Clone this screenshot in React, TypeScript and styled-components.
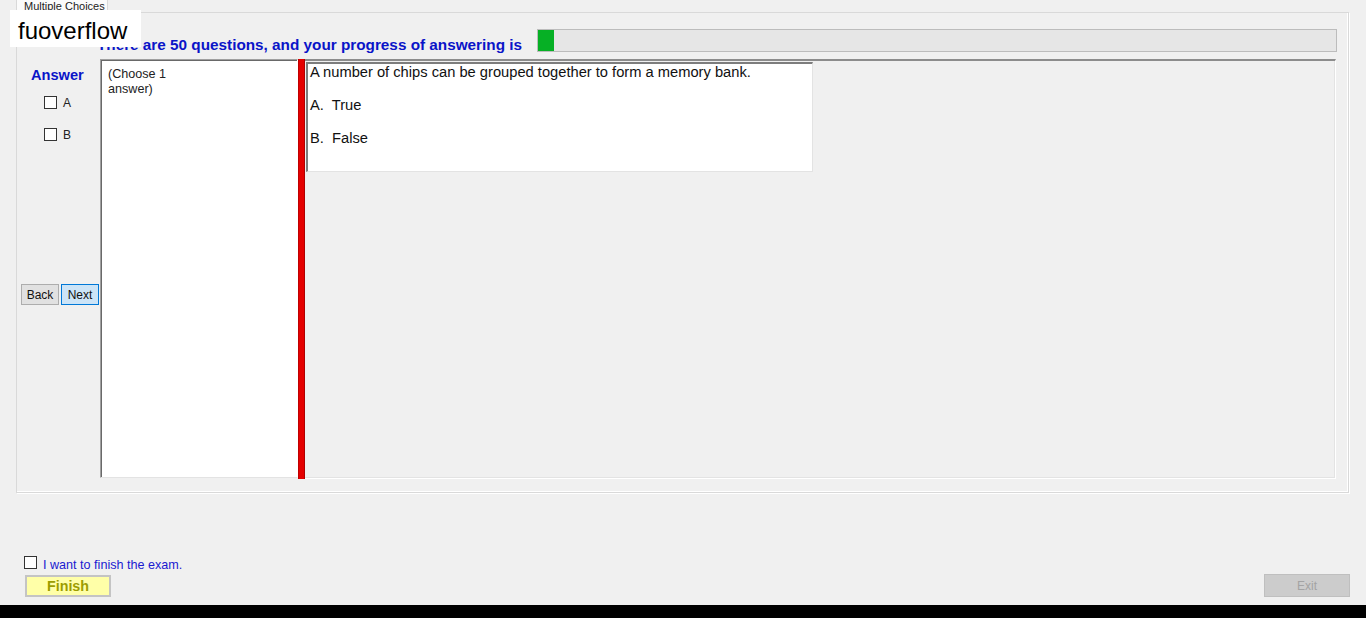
import React from "react";
import styled, { createGlobalStyle } from "styled-components";

const Global = createGlobalStyle`
  html, body { margin: 0; padding: 0; background: #f0f0f0; }
  body { font-family: "Liberation Sans", Arial, sans-serif; }
  * { box-sizing: border-box; }
`;

const Screen = styled.div`
  width: 1366px;
  height: 618px;
  background: #f0f0f0;
  display: flex;
  flex-direction: column;
  position: relative;
  overflow: hidden;
`;

const Main = styled.div`
  height: 605px;
  display: flex;
  flex-direction: column;
  padding: 0 17px 0 16px;
`;

const TabStrip = styled.div`
  height: 12px;
  display: flex;
  align-items: flex-end;
`;

const Tab = styled.div`
  width: 92px;
  height: 13px;
  margin-bottom: -1px;
  background: #fbfbfb;
  border: 1px solid #d9d9d9;
  border-top: none;
  border-bottom: none;
  font-size: 11px;
  line-height: 13px;
  color: #222;
  padding-left: 7px;
  overflow: hidden;
  position: relative;
  z-index: 1;
`;

const TabPage = styled.div`
  height: 481px;
  border: 1px solid #d9d9d9;
  box-shadow: inset -1px -1px 0 #fff, 1px 1px 0 #fff;
  display: flex;
  flex-direction: column;
`;

const ProgressRow = styled.div`
  height: 46px;
  display: flex;
  align-items: flex-start;
  padding-right: 11px;
`;

const ProgressLabel = styled.div`
  width: 505px;
  margin-top: 23px;
  text-align: right;
  font-size: 15.3px;
  line-height: 17px;
  font-weight: bold;
  color: #0a14c8;
  white-space: nowrap;
`;

const ProgressBar = styled.div`
  flex: 1;
  margin-left: 15px;
  margin-top: 16px;
  height: 23px;
  background: #e6e6e6;
  border: 1px solid #bcbcbc;
  display: flex;
`;

const ProgressFill = styled.div`
  background: #06b025;
  height: 100%;
`;

const ContentRow = styled.div`
  display: flex;
  height: 420px;
`;

const AnswerColumn = styled.div`
  width: 83px;
  display: flex;
  flex-direction: column;
`;

const AnswerTitle = styled.div`
  margin: 8px 0 0 14px;
  font-size: 14.6px;
  line-height: 17px;
  font-weight: bold;
  color: #0a14c8;
`;

const OptionRow = styled.label<{ $top: number }>`
  display: flex;
  align-items: center;
  gap: 6px;
  margin-left: 27px;
  margin-top: ${(p) => p.$top}px;
  font-size: 12px;
  color: #222;
  height: 13px;
`;

const Box = styled.span`
  width: 13px;
  height: 13px;
  background: #fff;
  border: 1px solid #333;
  display: inline-block;
  flex: none;
`;

const NavRow = styled.div`
  display: flex;
  gap: 2px;
  margin: 143px 0 0 4px;
`;

const NavButton = styled.button<{ $active?: boolean }>`
  width: 38px;
  height: 21px;
  padding: 0;
  font-family: "Liberation Sans", Arial, sans-serif;
  font-size: 12px;
  color: #111;
  background: ${(p) => (p.$active ? "#cce4f7" : "#e1e1e1")};
  border: 1px solid ${(p) => (p.$active ? "#0078d7" : "#adadad")};
`;

const Split = styled.div`
  width: 1236px;
  height: 420px;
  display: flex;
`;

const LeftPanel = styled.div`
  width: 198px;
  background: #fff;
  border-top: 1px solid #a0a0a0;
  border-left: 1px solid #a0a0a0;
  border-right: 1px solid #fff;
  border-bottom: 1px solid #e3e3e3;
  box-shadow: inset 1px 1px 0 #696969;
  padding: 7px 0 0 7px;
  font-size: 12.6px;
  line-height: 15px;
  color: #222;
  height: 419px;
`;

const Splitter = styled.div`
  width: 7px;
  background: #e40000;
  border-left: 1px solid #c00000;
  border-right: 1px solid #b00000;
`;

const RightPanel = styled.div`
  flex: 1;
  border-top: 2px solid #8c8c8c;
  border-right: 1px solid #fff;
  border-bottom: 1px solid #fff;
  box-shadow: inset -1px -1px 0 #e3e3e3;
  padding: 1px 0 0 1px;
`;

const QuestionBox = styled.div`
  width: 507px;
  height: 110px;
  background: #fff;
  border-top: 2px solid #7d7d7d;
  border-left: 2px solid #7d7d7d;
  border-right: 1px solid #e3e3e3;
  border-bottom: 1px solid #e3e3e3;
  padding: 0 0 0 2px;
  font-size: 14.7px;
  line-height: 17px;
  color: #111;
`;

const QLine = styled.div<{ $gap: number }>`
  margin-top: ${(p) => p.$gap}px;
  white-space: pre;
`;

const Bottom = styled.div`
  flex: 1;
  display: flex;
  align-items: flex-end;
  justify-content: space-between;
  padding: 0 0 8px 8px;
  margin-right: -1px;
`;

const FinishGroup = styled.div`
  display: flex;
  flex-direction: column;
  gap: 4px;
`;

const ConfirmRow = styled.label`
  display: flex;
  align-items: flex-start;
  gap: 6px;
  font-size: 12.6px;
  line-height: 15px;
  color: #1a1ad0;
  height: 15px;
`;

const ConfirmText = styled.span`
  padding-top: 2px;
`;

const FinishButton = styled.button`
  width: 86px;
  height: 22px;
  margin-left: 1px;
  padding: 0;
  background: #ffffa8;
  border: 2px solid #c4c4c4;
  font-family: "Liberation Sans", Arial, sans-serif;
  font-size: 14.3px;
  font-weight: bold;
  color: #9c9c00;
`;

const ExitButton = styled.button`
  width: 86px;
  height: 23px;
  padding: 0;
  background: #cccccc;
  border: 1px solid #bfbfbf;
  font-family: "Liberation Sans", Arial, sans-serif;
  font-size: 12px;
  color: #a3a3a3;
`;

const Footer = styled.div`
  height: 13px;
  background: #000;
`;

const Watermark = styled.div`
  position: absolute;
  left: 10px;
  top: 10px;
  width: 131px;
  height: 37px;
  background: #fff;
  font-size: 24px;
  line-height: 41px;
  padding-left: 8px;
  color: #000;
  z-index: 5;
`;

export default function App() {
  const progress = 2;
  return (
    <Screen>
      <Global />
      <Main>
        <TabStrip>
          <Tab>Multiple Choices</Tab>
        </TabStrip>
        <TabPage>
          <ProgressRow>
            <ProgressLabel>
              There are 50 questions, and your progress of answering is
            </ProgressLabel>
            <ProgressBar>
              <ProgressFill style={{ width: `${progress}%` }} />
            </ProgressBar>
          </ProgressRow>
          <ContentRow>
            <AnswerColumn>
              <AnswerTitle>Answer</AnswerTitle>
              <OptionRow $top={12}>
                <Box />A
              </OptionRow>
              <OptionRow $top={19}>
                <Box />B
              </OptionRow>
              <NavRow>
                <NavButton>Back</NavButton>
                <NavButton $active>Next</NavButton>
              </NavRow>
            </AnswerColumn>
            <Split>
              <LeftPanel>
                (Choose 1
                <br />
                answer)
              </LeftPanel>
              <Splitter />
              <RightPanel>
                <QuestionBox>
                  <QLine $gap={0}>A number of chips can be grouped together to form a memory bank.</QLine>
                  <QLine $gap={16}>A.  True</QLine>
                  <QLine $gap={16}>B.  False</QLine>
                </QuestionBox>
              </RightPanel>
            </Split>
          </ContentRow>
        </TabPage>
        <Bottom>
          <FinishGroup>
            <ConfirmRow>
              <Box />
              <ConfirmText>I want to finish the exam.</ConfirmText>
            </ConfirmRow>
            <FinishButton>Finish</FinishButton>
          </FinishGroup>
          <ExitButton>Exit</ExitButton>
        </Bottom>
      </Main>
      <Footer />
      <Watermark>fuoverflow</Watermark>
    </Screen>
  );
}
